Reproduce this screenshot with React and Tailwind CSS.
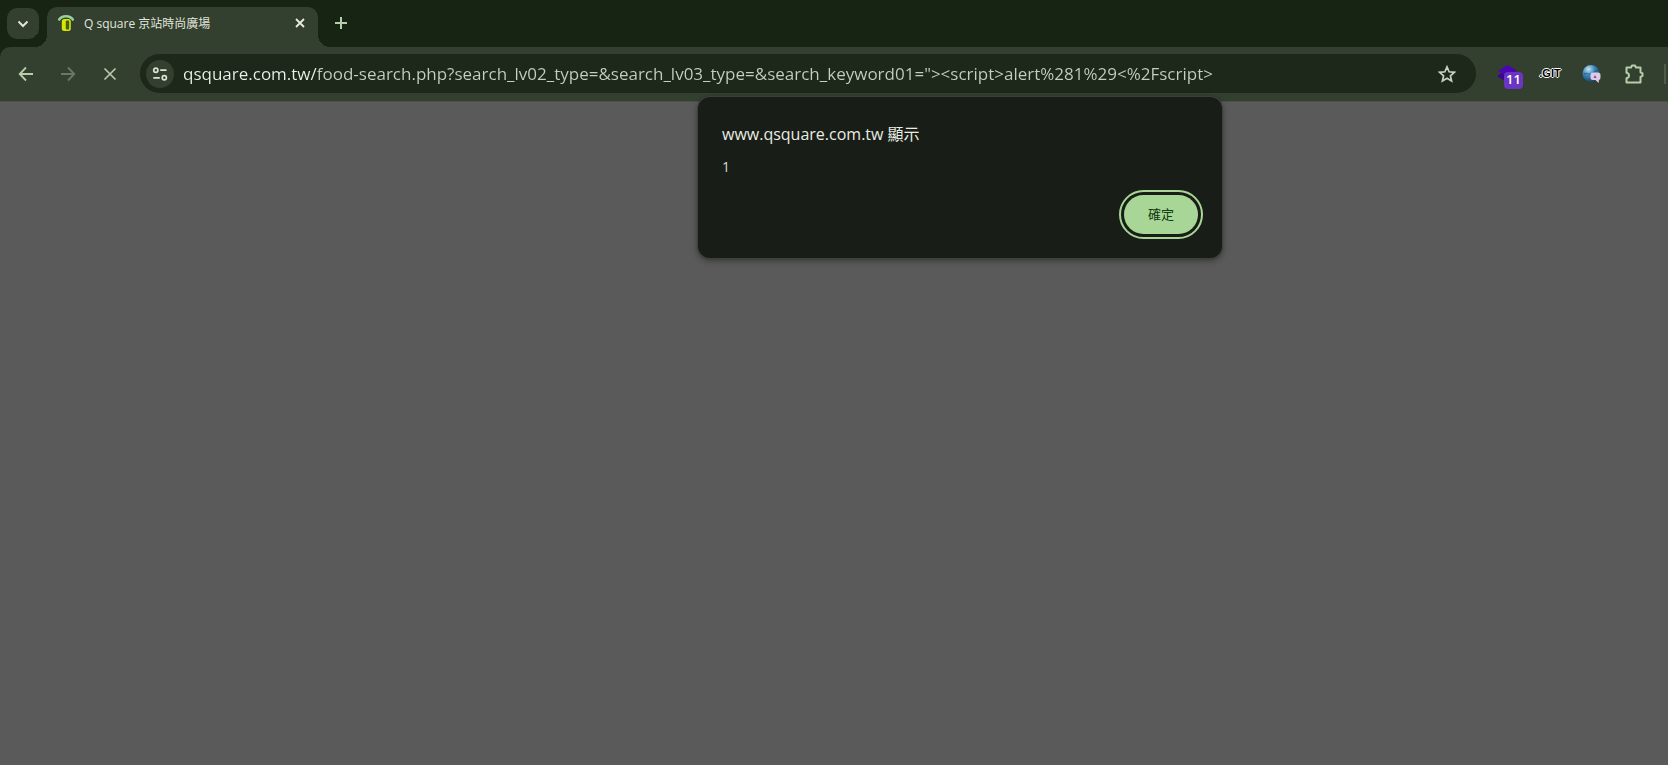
import React, { useState } from 'react';

const FONT = "font-['Open_Sans','Noto_Sans_CJK_TC',sans-serif]";
const PAGE_URL = 'qsquare.com.tw/food-search.php?search_lv02_type=&search_lv03_type=&search_keyword01="><script>alert%281%29<%2Fscript>';

const Icon = ({ className = '', size = 20, width = 2, children }) => (
  <svg
    width={size}
    height={size}
    viewBox={`0 0 ${size} ${size}`}
    fill="none"
    stroke="currentColor"
    strokeWidth={width}
    className={`shrink-0 ${className}`}
    aria-hidden="true"
  >
    {children}
  </svg>
);

const Favicon = () => (
  <svg width="16" height="16" viewBox="0 0 16 16" className="shrink-0" aria-hidden="true">
    <path d="M.6 5.500C3.500-.2 12.500-.2 15.400 5.500" fill="none" stroke="#9ad39a" strokeWidth="2.400" />
    <rect x="3.800" y="4" width="9" height="12" rx="2.500" fill="#d5e800" />
    <rect x="7.800" y="5.500" width="3.400" height="9" rx="1" fill="#4a5c12" />
  </svg>
);

const ToolButton = ({ label, className = '', children }) => (
  <button
    type="button"
    aria-label={label}
    className={`relative flex h-10 w-[42px] shrink-0 items-center justify-center ${className}`}
  >
    {children}
  </button>
);

const TabStrip = () => (
  <div className="flex h-[47px] items-start bg-[#182413] pl-[7px]">
    <button
      type="button"
      aria-label="搜尋分頁"
      className="mt-2 flex h-[31px] w-8 items-center justify-center rounded-[10px] bg-[#333f2f] text-[#dfe6d9]"
    >
      <Icon size={12}><path d="M1.500 3.500L6 8l4.500-4.500" /></Icon>
    </button>
    <div className="relative mt-[7px] ml-2 flex h-10 w-[271px] rounded-t-[10px] bg-[#333f2f] pr-3 pb-2 pl-[11px]">
      {/* curved feet of the active tab */}
      <span className="absolute bottom-0 -left-3 h-3 w-3 bg-[radial-gradient(circle_at_0_0,#182413_12px,#333f2f_12px)]" />
      <span className="absolute -right-3 bottom-0 h-3 w-3 bg-[radial-gradient(circle_at_100%_0,#182413_12px,#333f2f_12px)]" />
      <div className="flex min-w-0 flex-1 items-center gap-[10px]">
        <Favicon />
        <span className="flex-1 truncate pt-px text-xs text-[#e1e6dc]">Q square 京站時尚廣場</span>
        <button type="button" aria-label="關閉" className="text-[#e8ede3]">
          <Icon size={12} width={1.8}><path d="M2 2l8 8M10 2l-8 8" /></Icon>
        </button>
      </div>
    </div>
    <button type="button" aria-label="新分頁" className="mt-[7px] ml-[7px] flex h-8 w-8 items-center justify-center text-[#b7ceac]">
      <Icon size={14} width={2}><path d="M7 1v12M1 7h12" /></Icon>
    </button>
  </div>
);

const Toolbar = () => {
  const [url, setUrl] = useState(PAGE_URL);

  return (
    <div className="bg-[#182413]">
      <div className="flex h-[55px] items-center overflow-hidden rounded-tl-[10px] border-b border-[#4a5147] bg-[#333f2f] pb-px pl-[5px]">
        <ToolButton label="上一頁" className="text-[#b7ceac]">
          <Icon size={16} width={1.8}><path d="M15 8H2M8 1.500L1.700 8 8 14.500" /></Icon>
        </ToolButton>
        <ToolButton label="下一頁" className="text-[#6a7765]">
          <Icon size={16} width={1.8}><path d="M1 8h13M8 1.500L14.300 8 8 14.500" /></Icon>
        </ToolButton>
        <ToolButton label="停止載入" className="text-[#b7ceac]">
          <Icon size={14} width={1.6}><path d="M1.500 1.500l11 11M12.500 1.500l-11 11" /></Icon>
        </ToolButton>

        <div className="mr-[11px] ml-[9px] flex h-[39px] min-w-0 flex-1 items-center rounded-full bg-[#1d281a] pr-5 pl-[6px]">
          <button type="button" aria-label="網站資訊" className="flex h-7 w-7 shrink-0 items-center justify-center rounded-full bg-[#333f2f] text-[#dbe4d5]">
            <Icon size={16} width={1.7}>
              <circle cx="3.800" cy="4.200" r="2.100" />
              <path d="M8.200 4.200h6.300M1.300 11.800h6.500" />
              <circle cx="12.300" cy="11.800" r="2.100" />
            </Icon>
          </button>
          {/* the host part of the address is brighter than its path */}
          <input
            type="text"
            aria-label="網址列"
            spellCheck={false}
            value={url}
            onChange={(e) => setUrl(e.target.value)}
            className="ml-[9px] h-8 min-w-0 flex-1 bg-[linear-gradient(90deg,#edf2e8_133px,#c5cfbe_133px)] bg-clip-text text-[17px] text-transparent caret-white outline-none"
          />
          <button type="button" aria-label="加入書籤" className="shrink-0 text-[#c6d0bf]">
            <Icon size={18} width={1.7}>
              <path d="M9 1.900l2.100 4.900 5.300.5-4 3.500 1.200 5.200L9 13.200 4.400 16l1.200-5.200-4-3.500 5.300-.5z" />
            </Icon>
          </button>
        </div>

        <ToolButton label="擴充功能 11">
          <svg width="20" height="20" viewBox="0 0 20 20" aria-hidden="true">
            <path d="M9.500 1l9.500 5.500L9.500 12 0 7z" fill="#4a05b5" />
            <path d="M0 11l3.500-2 6 3.500 6-3.500 3 1.700v3L9.500 18 0 13z" fill="#3a0596" />
          </svg>
          <span className="absolute top-[18px] left-[17px] flex h-[17px] w-[19px] items-center justify-center rounded-[4px] bg-[#6a35c0] text-[13px] font-semibold text-white">
            11
          </span>
        </ToolButton>
        <ToolButton label="Git">
          <span className="font-['Liberation_Sans',sans-serif] text-[11px] font-bold text-black [text-shadow:1px_0_white,-1px_0_white,0_1px_white,0_-1px_white]">.GIT</span>
        </ToolButton>
        <ToolButton label="地球">
          <svg width="20" height="20" viewBox="0 0 20 20" aria-hidden="true">
            <defs>
              <radialGradient id="globe" cx="0.35" cy="0.25" r="0.8">
                <stop offset="0" stopColor="#c4e4f4" />
                <stop offset="0.45" stopColor="#3d89b8" />
                <stop offset="1" stopColor="#123d63" />
              </radialGradient>
            </defs>
            <circle cx="9" cy="9.500" r="8.500" fill="url(#globe)" />
            <path d="M2 10c3-2 4 1 7 0s4-3 7-4" fill="none" stroke="#174f7a" strokeWidth="1.200" opacity="0.6" />
            <path d="M10.500 8.500h5.500q2.500 0 2.500 2.500v2.500q0 2-1.500 2.500l-.5 3-3-3h-2.500q-2.500 0-2.500-2.500v-2.500q0-2.500 2-2.500z" fill="#dccbe4" />
            <path d="M11.500 14l1.500-3 1.500 3z" fill="#9c3aa8" />
          </svg>
        </ToolButton>
        <ToolButton label="擴充功能" className="text-[#b7ceac]">
          <Icon size={20}>
            <path
              d="M2.500 3.500h4.500l1-2h3l1 2h4.500v4.800l2 1v2.600l-2 1v5.600h-14v-4.300c3.300-.5 3.300-5 0-5.500z"
              strokeLinejoin="round"
            />
          </Icon>
        </ToolButton>
        <span className="mr-[2px] ml-[9px] h-5 w-[2px] shrink-0 bg-[#4c5c46]" />
      </div>
    </div>
  );
};

const AlertDialog = () => (
  <div
    role="alertdialog"
    aria-labelledby="alert-title"
    aria-describedby="alert-text"
    className="absolute top-[97px] left-[698px] w-[524px] rounded-xl bg-[#191d17] px-6 pt-[25px] pb-6 shadow-[0_2px_6px_rgba(0,0,0,0.5)] ring-1 ring-[#3c4239]"
  >
    <h1 id="alert-title" className="text-base leading-6 text-[#e8ece2]">www.qsquare.com.tw 顯示</h1>
    <p id="alert-text" className="mt-[11px] text-sm leading-5 text-[#d8decf]">1</p>
    <div className="mt-[18px] flex justify-end">
      <button
        type="button"
        className="h-[39px] w-[74px] rounded-full bg-[#a8d696] text-[13px] text-[#0f3a12] outline-2 outline-offset-[3px] outline-[#a8d696]"
      >
        確定
      </button>
    </div>
  </div>
);

export default function App() {
  return (
    <div className={`relative flex min-h-screen flex-col bg-[#5a5a5a] ${FONT}`}>
      <TabStrip />
      <Toolbar />
      <main className="flex-1 border-b border-[#61585c]" />
      <AlertDialog />
    </div>
  );
}
